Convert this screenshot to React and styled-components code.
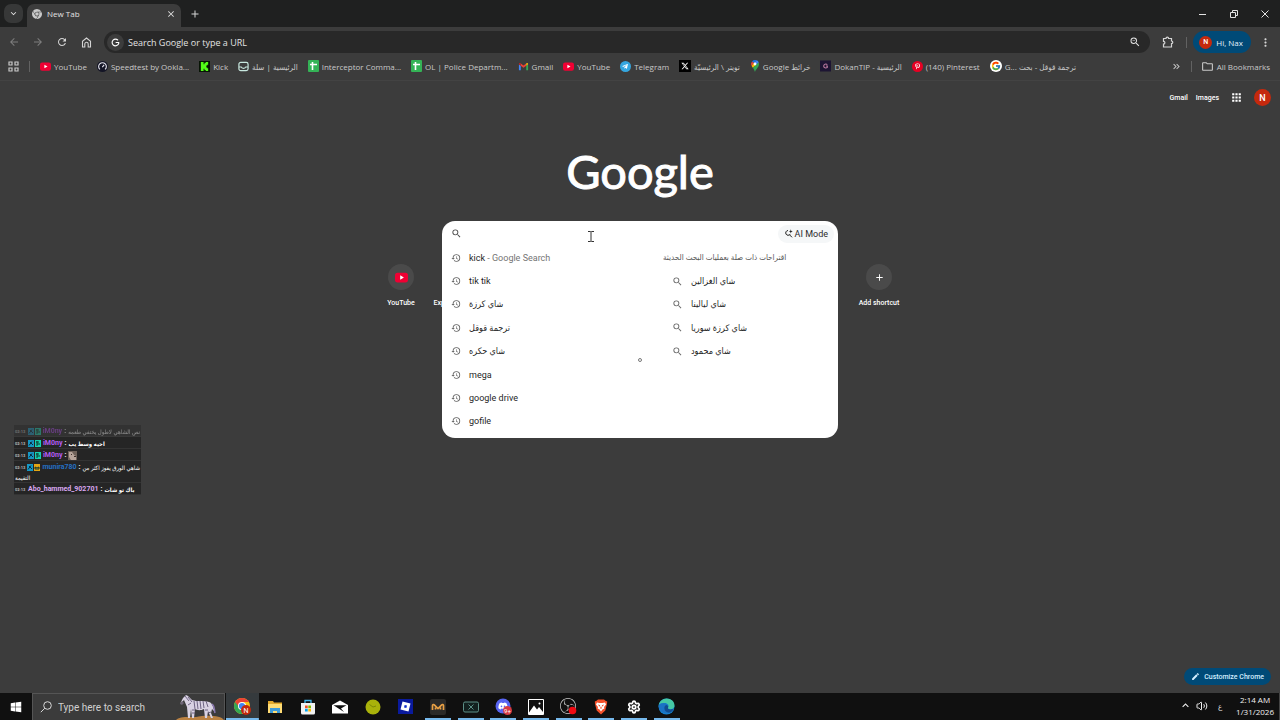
import styled, { createGlobalStyle } from "styled-components";
import {
    MdArrowBack,
    MdArrowForward,
    MdRefresh,
    MdOutlineZoomOut,
    MdMoreVert,
    MdSearch,
    MdHistory,
    MdAdd,
    MdApps,
    MdEdit,
    MdOutlineFolder,
    MdClose,
    MdKeyboardArrowDown,
    MdKeyboardArrowUp,
    MdKeyboardDoubleArrowRight,
} from "react-icons/md";
import { FcGoogle } from "react-icons/fc";
import { FaTelegramPlane, FaPinterestP, FaDiscord, FaWindows } from "react-icons/fa";
import { SiGooglechrome, SiObsstudio } from "react-icons/si";
import { FaXTwitter, FaG } from "react-icons/fa6";
import { Volume2, Settings } from "lucide-react";

const GlobalStyle = createGlobalStyle`
    * {
        box-sizing: border-box;
    }

    body {
        margin: 0;
        background: #3c3c3c;
        font-family: "Open Sans", "DejaVu Sans Condensed", "DejaVu Sans", sans-serif;
        color: #e3e3e3;
    }

    button, input {
        font: inherit;
        color: inherit;
        border: 0;
        padding: 0;
        background: none;
        outline: none;
    }

    a {
        color: inherit;
        text-decoration: none;
    }

    svg {
        display: block;
        flex: none;
    }
`;

const Screen = styled.div`
    display: flex;
    flex-direction: column;
    height: 100vh;
    overflow: hidden;
`;

/* ---------- browser ---------- */

const TabStrip = styled.header`
    display: flex;
    align-items: center;
    height: 27px;
    padding-left: 4px;
    background: #1f2020;
`;

const TabSearch = styled.button`
    display: flex;
    align-items: center;
    justify-content: center;
    width: 19px;
    height: 19px;
    border-radius: 7px;
    background: #373838;
`;

const Tab = styled.div`
    display: flex;
    align-items: center;
    align-self: flex-end;
    gap: 5px;
    width: 154px;
    height: 23px;
    margin-left: 4px;
    padding: 0 5px 4px;
    border-radius: 7px 7px 0 0;
    background: #3c3c3c;
    font-size: 8px;
`;

const TabTitle = styled.span`
    flex: 1;
`;

const IconButton = styled.button`
    display: flex;
    align-items: center;
    justify-content: center;
    width: ${({ $w }) => $w || 24}px;
    height: 19px;
    color: ${({ $dim }) => ($dim ? "#7d7d7d" : "#d5d5d5")};
`;

const WindowButtons = styled.div`
    display: flex;
    margin-left: auto;
`;

const Toolbar = styled.div`
    display: flex;
    align-items: center;
    height: 30px;
    padding: 0 2px;
`;

const Omnibox = styled.label`
    display: flex;
    align-items: center;
    flex: 1;
    gap: 4px;
    height: 22px;
    margin-left: 6px;
    padding: 0 9px 0 3px;
    border-radius: 11px;
    background: #282828;
    font-size: 9px;

    input {
        flex: 1;
    }

    input::placeholder {
        color: #e3e3e3;
        opacity: 1;
    }
`;

const SiteIcon = styled.span`
    display: flex;
    align-items: center;
    justify-content: center;
    width: 17px;
    height: 17px;
    border-radius: 50%;
    background: #3c3c3c;
    color: #fff;
`;

const Divider = styled.span`
    width: 1px;
    height: 11px;
    background: #626262;
`;

const Profile = styled.button`
    display: flex;
    align-items: center;
    gap: 4px;
    height: 22px;
    margin: 0 1px 0 6px;
    padding: 0 8px 0 6px;
    border-radius: 11px;
    background: #004a77;
    color: #e6f3fc;
    font-size: 8px;
`;

const Avatar = styled.span`
    display: flex;
    align-items: center;
    justify-content: center;
    width: ${({ $size }) => $size}px;
    height: ${({ $size }) => $size}px;
    border-radius: 50%;
    background: #c5290d;
    color: #fff;
    font-family: Roboto, sans-serif;
    font-size: ${({ $size }) => ($size > 14 ? 9 : 7)}px;
    font-weight: 500;
`;

const BookmarkBar = styled.nav`
    display: flex;
    align-items: center;
    gap: 10px;
    height: 24px;
    padding: 0 10px 5px 8px;
    border-bottom: 1px solid #434343;
    color: #c9c9c9;
    font-size: 8px;
    white-space: nowrap;
`;

const Bookmark = styled.a`
    display: flex;
    align-items: center;
    gap: 3px;
`;

const BookmarkEnd = styled.div`
    display: flex;
    align-items: center;
    gap: 9px;
    margin-left: auto;
`;

/* ---------- new tab page ---------- */

const Page = styled.main`
    display: flex;
    flex-direction: column;
    align-items: center;
    flex: 1;
    min-height: 0;
    padding: 7px 9px 8px;
`;

const PageLinks = styled.div`
    display: flex;
    align-items: center;
    align-self: flex-end;
    gap: 8px;
    height: 19px;
    font-family: Roboto, sans-serif;
    font-size: 7px;
    font-weight: 500;
    color: #fff;
`;

const AppsButton = styled.button`
    margin: 0 3px;
`;

const Logo = styled.h1`
    margin: 34px 0 0;
    height: 80px;
    font-family: Lato, sans-serif;
    font-size: 47px;
    font-weight: 400;
    line-height: 60px;
    color: #fff;
    -webkit-text-stroke: 1px #fff;
`;

const SearchArea = styled.div`
    position: relative;
    width: 396px;
    height: 43px;
`;

const SearchPanel = styled.form`
    position: absolute;
    inset: 0 0 auto;
    padding-bottom: 5px;
    border-radius: 13px;
    background: #fff;
    color: #1f1f1f;
    font-family: Roboto, "DejaVu Sans Condensed", "DejaVu Sans", sans-serif;
    font-size: 9px;
`;

const SearchRow = styled.div`
    display: flex;
    align-items: center;
    gap: 8px;
    height: 25px;
    padding: 0 4px 0 9px;
    color: #474747;

    input {
        flex: 1;
    }
`;

const AiButton = styled.button`
    display: flex;
    align-items: center;
    gap: 2px;
    height: 18px;
    padding: 0 6px;
    border-radius: 9px;
    background: #f5f7f8;
    color: #2b2b2b;
`;

const Columns = styled.div`
    display: grid;
    grid-template-columns: 221px 1fr;
`;

const List = styled.ul`
    display: grid;
    grid-template-rows: repeat(8, 1fr);
    height: 187px;
    margin: 0;
    padding: 0;
    list-style: none;
`;

const Suggestion = styled.li`
    display: flex;
    align-items: center;
    gap: 8px;
    padding-left: 9px;

    svg {
        color: #666;
    }

    em {
        font-style: normal;
        color: #747474;
    }
`;

const ListTitle = styled.li`
    display: flex;
    align-items: center;
    font-size: 8px;
    color: #555;
`;

const Shortcuts = styled.div`
    display: flex;
    width: 531px;

    a:last-child {
        margin-left: auto;
    }
`;

const Shortcut = styled.a`
    display: flex;
    flex-direction: column;
    align-items: ${({ $start }) => ($start ? "flex-start" : "center")};
    gap: 8px;
    width: 53px;
    padding-left: ${({ $start }) => ($start ? 6 : 0)}px;
    font-family: Roboto, sans-serif;
    font-size: 7px;
    font-weight: 500;
    line-height: 10px;
    color: #fff;
    white-space: nowrap;
`;

const ShortcutIcon = styled.span`
    display: flex;
    align-items: center;
    justify-content: center;
    width: 26px;
    height: 26px;
    border-radius: 50%;
    background: #4a4a4a;
`;

const Customize = styled.button`
    display: flex;
    align-items: center;
    align-self: flex-end;
    gap: 4px;
    height: 17px;
    margin-top: auto;
    padding: 0 7px;
    border-radius: 9px;
    background: #004a77;
    color: #d3eeff;
    font-family: Roboto, sans-serif;
    font-size: 7px;
    font-weight: 500;
`;

/* ---------- things over the page ---------- */

const Chat = styled.aside`
    position: fixed;
    left: 14px;
    top: 425px;
    width: 127px;
    font-family: Roboto, "DejaVu Sans Condensed", "DejaVu Sans", sans-serif;
    font-size: 7px;
    font-weight: 700;
    white-space: nowrap;
`;

const Message = styled.div`
    padding: 1px 1px 0;
    border-bottom: 1px solid #333;
    background: #252525;
    color: #fff;
    opacity: ${({ $faded }) => ($faded ? 0.4 : 1)};
`;

const MessageLine = styled.div`
    display: flex;
    align-items: center;
    gap: 2px;
    height: 10px;
`;

const Time = styled.time`
    width: 11px;
    font-size: 4px;
    color: #bbb;
`;

const Nick = styled.span`
    color: ${({ $color }) => $color};
`;

const ChatText = styled.bdi`
    font-size: 6px;
    font-weight: ${({ $light }) => ($light ? 400 : 700)};
`;

const Pointer = styled.svg`
    position: fixed;
    left: ${({ $x }) => $x}px;
    top: ${({ $y }) => $y}px;
`;

/* ---------- taskbar ---------- */

const Taskbar = styled.footer`
    display: flex;
    height: 27px;
    background: #101010;
`;

const StartButton = styled.button`
    display: flex;
    align-items: center;
    justify-content: center;
    width: 32px;
    color: #fff;
`;

const TaskSearch = styled.label`
    display: flex;
    align-items: center;
    gap: 6px;
    width: 193px;
    padding-left: 7px;
    border: 1px solid #555;
    border-bottom: 0;
    background: #3b3b3b;
    font-family: Roboto, sans-serif;
    font-size: 10px;

    input {
        flex: 1;
        min-width: 0;
    }

    input::placeholder {
        color: #d0d0d0;
        opacity: 1;
    }
`;

const TaskApps = styled.div`
    display: flex;
    width: 457px;
    margin-left: 1px;
`;

const TaskApp = styled.button`
    display: flex;
    align-items: center;
    justify-content: center;
    flex: 1;
    background-color: ${({ $active }) => ($active ? "#353a3d" : "transparent")};
    background-image: ${({ $open }) => ($open ? "linear-gradient(#76b9ed, #76b9ed)" : "none")};
    background-repeat: no-repeat;
    background-position: bottom;
    background-size: ${({ $active }) => ($active ? "100%" : "26px")} 2px;
`;

const Tray = styled.div`
    display: flex;
    align-items: center;
    gap: 4px;
    margin-left: auto;
    padding: 0 3px 2px 0;
    border-right: 1px solid #444;
    font-size: 8px;
    line-height: 12px;
    color: #f0f0f0;
`;

const Clock = styled.time`
    margin-left: 4px;
    padding-right: 2px;
    text-align: center;
`;

const YouTubeIcon = ({ size = 11 }) => (
    <svg width={size} height={size} viewBox="0 0 12 12">
        <rect y="1.5" width="12" height="9" rx="2.4" fill="#f00033" />
        <path d="M4.8 4v4l3.4-2z" fill="#fff" />
    </svg>
);

const SheetIcon = () => (
    <svg width="11" height="12" viewBox="0 0 11 12">
        <rect width="11" height="12" rx="1" fill="#34b356" />
        <path d="M2 4.5h7M4.5 2v8" stroke="#fff" strokeWidth="1.6" />
    </svg>
);

const SpeedIcon = () => (
    <svg width="11" height="11" viewBox="0 0 12 12">
        <circle cx="6" cy="6" r="6" fill="#141526" />
        <path d="M3.2 9.2a4.2 4.2 0 1 1 5.6 0M5.8 6.6l2-2.4" fill="none" stroke="#e8e8f0" strokeWidth="1.2" />
    </svg>
);

const KickIcon = () => (
    <svg width="11" height="11" viewBox="0 0 12 12">
        <rect width="12" height="12" fill="#071405" />
        <path d="M2 1h3v2.5h1V2h1.5V1H10v3H9v1H8v2h1v1h1v3H7.5v-1H6V8.5H5V11H2z" fill="#53fc18" />
    </svg>
);

const SallaIcon = () => (
    <svg width="11" height="11" viewBox="0 0 12 12" fill="none" stroke="#c8e8df">
        <rect x="1" y="1.5" width="10" height="9" rx="2" strokeWidth="1.3" />
        <path d="M1 6.5h2.5c.5 2 4.500 2 5 0H11" strokeWidth="1.2" />
    </svg>
);

const GmailIcon = () => (
    <svg width="11" height="11" viewBox="0 0 12 12">
        <path d="M1 10V3.5l2 1.6V10z" fill="#4285f4" />
        <path d="M9 10V5.1l2-1.6V10z" fill="#34a853" />
        <path d="M3 5.1V2.6l3 2.3 3-2.3v2.5L6 7.4z" fill="#ea4335" />
        <path d="M1 3.5C1 2.2 2.2 1.9 3 2.6v2.5z" fill="#c5221f" />
        <path d="M11 3.5c0-1.3-1.2-1.6-2-.9v2.5z" fill="#fbbc04" />
    </svg>
);

const TelegramIcon = () => (
    <svg width="11" height="11" viewBox="0 0 12 12">
        <circle cx="6" cy="6" r="6" fill="#35a6df" />
        <FaTelegramPlane x="2" y="2.5" size="7" color="#fff" />
    </svg>
);

const XIcon = () => (
    <svg width="12" height="12" viewBox="0 0 12 12">
        <rect width="12" height="12" fill="#000" />
        <FaXTwitter x="2" y="2" size="8" color="#fff" />
    </svg>
);

const MapsIcon = () => (
    <svg width="10" height="12" viewBox="0 0 10 12">
        <path d="M5 0a4 4 0 0 0-3 1.4L4 3l2.6-2.7A4 4 0 0 0 5 0z" fill="#1a73e8" />
        <path d="M2 1.4A4 4 0 0 0 1.6 6L4 3z" fill="#ea4335" />
        <path d="M6.6.3 4 3l2 2 2.8-2.6A4 4 0 0 0 6.6.3z" fill="#4285f4" />
        <path d="M1.6 6l1.2 1.7L6 5 4 3z" fill="#fbbc04" />
        <path d="M2.8 7.7C4 9.3 4.5 10.3 5 12c.6-3 3.9-4.3 4-8 0-.6 0-1.1-.2-1.6z" fill="#34a853" />
        <circle cx="5" cy="4" r="1.4" fill="#fff" />
    </svg>
);

const DokanIcon = () => (
    <svg width="11" height="12" viewBox="0 0 12 12">
        <rect width="12" height="12" fill="#1d1533" />
        <path d="M8 4.5C6.5 3.2 4 4 4 6s2.5 2.8 4 1.5V6H6.5" fill="none" stroke="#b9799f" strokeWidth="1.2" />
    </svg>
);

const PinterestIcon = () => (
    <svg width="11" height="11" viewBox="0 0 12 12">
        <circle cx="6" cy="6" r="6" fill="#e60023" />
        <FaPinterestP x="2.5" y="2.5" size="7" color="#fff" />
    </svg>
);

const GoogleIcon = () => (
    <svg width="12" height="12" viewBox="0 0 12 12">
        <circle cx="6" cy="6" r="6" fill="#fff" />
        <FcGoogle x="1" y="1" size="10" />
    </svg>
);

const GridIcon = () => (
    <svg width="11" height="11" viewBox="0 0 11 11" fill="none" stroke="#c9c9c9" strokeWidth="1.2">
        <path d="M1 1h3v3H1zM7 1h3v3H7zM1 7h3v3H1zM7 7h3v3H7z" />
    </svg>
);

const HomeIcon = () => (
    <svg width="11" height="11" viewBox="0 0 11 11" fill="none" stroke="currentColor" strokeWidth="1.1">
        <path d="M1.5 10V4.2L5.5 1l4 3.2V10H7.2V7a1.7 1.7 0 0 0-3.4 0v3z" />
    </svg>
);

const PuzzleIcon = () => (
    <svg width="12" height="12" viewBox="0 0 12 12" fill="none" stroke="currentColor" strokeWidth="1.2">
        <path d="M1.5 2.5H4a1.3 1.3 0 0 1 2.6 0h2.9V5a1.3 1.3 0 0 1 0 2.6V11h-8V8.2a1.4 1.4 0 0 0 0-2.8z" />
    </svg>
);

const AiIcon = () => (
    <svg width="9" height="9" viewBox="0 0 9 9" fill="none" stroke="#1f1f1f">
        <path d="M4 1.5a2.4 2.4 0 1 0 2.2 3.6M5.5 5.8 8 8.3" />
        <path d="M6.8.2 7.3 2l1.5.5-1.5.5-.5 1.6-.5-1.6-1.5-.5L6.3 2z" fill="#1f1f1f" stroke="none" />
    </svg>
);

const ChromeIcon = () => (
    <svg width="19" height="19" viewBox="0 0 19 19">
        <circle cx="9" cy="9" r="8" fill="#fbc116" />
        <path d="M9 9 2.1 5A8 8 0 0 0 9 17z" fill="#34a853" />
        <path d="M9 5h6.9A8 8 0 0 0 2.1 5L6 10z" fill="#ea4335" />
        <circle cx="9" cy="9" r="4" fill="#fff" />
        <circle cx="9" cy="9" r="3.1" fill="#4285f4" />
        <circle cx="13" cy="13" r="5" fill="#c5290d" />
        <text x="13" y="15.5" fontSize="7" textAnchor="middle" fill="#fff" fontFamily="Roboto">N</text>
    </svg>
);

const FolderIcon = () => (
    <svg width="16" height="14" viewBox="0 0 16 14">
        <path d="M1 1h5l1 1.5h8V13H1z" fill="#e2a92e" />
        <path d="M1 4h14v9H1z" fill="#ffdc74" />
        <path d="M3 13V8h10v5h-3v-2H6v2z" fill="#3f9bd8" />
    </svg>
);

const StoreIcon = () => (
    <svg width="16" height="16" viewBox="0 0 16 16">
        <path d="M5 4V1.5h6V4" fill="none" stroke="#42b5ea" strokeWidth="1.3" />
        <path d="M1 4h14v10a1.5 1.5 0 0 1-1.5 1.5h-11A1.5 1.5 0 0 1 1 14z" fill="#f1f1f1" />
        <path d="M5 6.5h2.7v2.7H5z" fill="#f25022" />
        <path d="M8.3 6.5H11v2.7H8.3z" fill="#7fba00" />
        <path d="M5 9.8h2.7v2.7H5z" fill="#00a4ef" />
        <path d="M8.3 9.8H11v2.7H8.3z" fill="#ffb900" />
    </svg>
);

const MailIcon = () => (
    <svg width="16" height="14" viewBox="0 0 16 14">
        <path d="M0 5 8 .5 16 5v8.5H0z" fill="#fff" />
        <path d="M1.5 5.2h13L9 8.6l3 3.4z" fill="#101010" />
    </svg>
);

const LimeIcon = () => (
    <svg width="16" height="16" viewBox="0 0 16 16">
        <circle cx="8" cy="8" r="7.5" fill="#a9b20b" />
        <path d="M4.5 5.5 8 8l3-1" fill="none" stroke="#7e8a05" />
    </svg>
);

const RobloxIcon = () => (
    <svg width="15" height="15" viewBox="0 0 15 15">
        <rect width="15" height="15" fill="#0a1a9c" />
        <path d="m4.5 2.5 8 2-2 8-8-2z" fill="#fff" />
        <path d="m6.6 6 2.4.6-.6 2.4-2.4-.6z" fill="#1330c8" />
    </svg>
);

const MoIcon = () => (
    <svg width="16" height="16" viewBox="0 0 16 16">
        <rect width="16" height="16" rx="2" fill="#2b2a28" />
        <path
            d="M2.5 11V6.5a1 1 0 0 1 1.8-.6L8 9.5l3.7-3.6a1 1 0 0 1 1.8.6V11M5.5 10.500v-2M10.500 10.500v-2"
            fill="none"
            stroke="#e8a045"
            strokeWidth="1.7"
        />
    </svg>
);

const BoxIcon = () => (
    <svg width="16" height="12" viewBox="0 0 16 12" fill="none" stroke="#5d8f87">
        <rect x=".5" y="1" width="15" height="10" rx="1.5" fill="#12201f" />
        <path d="m5.5 3.5 5 5M10.5 3.5l-5 5" />
    </svg>
);

const DiscordIcon = () => (
    <svg width="17" height="17" viewBox="0 0 17 17">
        <circle cx="8" cy="8" r="7.5" fill="#5865f2" />
        <FaDiscord x="3" y="3" size="10" color="#fff" />
        <circle cx="12.5" cy="12.5" r="4.5" fill="#d83a41" />
        <text x="12.5" y="15" fontSize="6" textAnchor="middle" fill="#fff" fontFamily="Roboto">9+</text>
    </svg>
);

const PhotosIcon = () => (
    <svg width="16" height="16" viewBox="0 0 16 16">
        <path d="M.5.5h15v15H.5z" fill="none" stroke="#fff" />
        <path d="m1 13.5 5-7 3 4 2-2.5 4 5v2H1z" fill="#fff" />
        <circle cx="11.5" cy="4.5" r="1" fill="#fff" />
    </svg>
);

const ObsIcon = () => (
    <svg width="17" height="17" viewBox="0 0 17 17">
        <SiObsstudio size="16" color="#c9c9c9" />
        <circle cx="12.5" cy="12.5" r="3.8" fill="#f00b13" />
    </svg>
);

const BraveIcon = () => (
    <svg width="14" height="16" viewBox="0 0 14 16">
        <path d="M4 .5h6l1.5 1.3 1.7.7L13 5l-1.7 6.5L7 15.5l-4.3-4L1 5 .8 2.5l1.7-.7z" fill="#f4502a" />
        <path d="m3 3.5 2.500.5h3l2.500-.5 1 2-2 2.500.4 1.500-2 1L7 12.500l-1.400-2-2-1L4 8 2 5.500z" fill="#fff" />
        <path d="m3.8 5.5 2.4.7-.5 1.5zM10.2 5.5l-2.4.7.5 1.5zM7 7l1 2.500H6z" fill="#f4502a" />
    </svg>
);

const EdgeIcon = () => (
    <svg width="17" height="17" viewBox="0 0 17 17">
        <circle cx="8.5" cy="8.5" r="8" fill="#1683d0" />
        <path d="M.6 7.5C1.2 3.4 4.6.5 8.6.5c4.6 0 7.9 3.3 7.9 6.7 0 2.4-1.7 4-4 4-1.7 0-2.8-.8-2.5-1.5 1.6-2-.4-4.6-3.5-4.6C3.7 5.1 1.6 6 .6 7.5z" fill="#45c8a5" />
        <path d="M.6 7.5C2.6 4.5 7.9 4.2 9.8 7.2c-1.8-.6-3.5.5-3.5 2.8 0 3.2 2.6 5.2 6 4.5A8 8 0 0 1 .6 7.5z" fill="#1b72c4" />
        <path d="M10 9.7c-.5 1 1 1.8 2.7 1.7 1.3 0 2.2-.4 3-.9-.4 1.6-1.7 3.3-3.4 4-3.4.7-6-1.3-6-4.5 0-1.5 1-2.7 2.3-2.9 1.5.4 2 1.7 1.4 2.6z" fill="#124c91" />
    </svg>
);

const Zebra = () => (
    <svg width="48" height="26" viewBox="0 0 48 26">
        <path d="M0 26c3-4 14-3 20-3 9-2 25-2 28 3z" fill="#b98142" />
        <path d="M4 10 7 4l3-3 2 1 4 4c5 2 12 0 17 2 4 1 4 6 6 10l-3-3-1 4 2 5h-2l-3-7-1 7h-2l-1-9c-4 2-7 1-9 0l-1 9h-2l-1-9-1 9h-2l-1-11-3-7-4 4z" fill="#d9d2e3" />
        <path d="m9 2 4 5m-1-4 4 5m-1 1-3 2m6-4 1 8m2-8 1 8m2-8 1 8m2-8 1 7m2-7 2 6M16 16h3m-3 3h3m10-3h3m0 3 3-1" stroke="#625777" strokeWidth=".9" fill="none" />
        <path d="M36 10c3 2 2 6 3 9" stroke="#8b78b0" strokeWidth="1.5" fill="none" />
        <path d="m4 10 2-3 2 2-2 2z" fill="#6d6475" />
    </svg>
);

const bookmarks = [
    { icon: <YouTubeIcon />, text: "YouTube" },
    { icon: <SpeedIcon />, text: "Speedtest by Ookla..." },
    { icon: <KickIcon />, text: "Kick" },
    { icon: <SallaIcon />, text: "الرئيسية | سلة" },
    { icon: <SheetIcon />, text: "Interceptor Comma..." },
    { icon: <SheetIcon />, text: "OL | Police Departm..." },
    { icon: <GmailIcon />, text: "Gmail" },
    { icon: <YouTubeIcon />, text: "YouTube" },
    { icon: <TelegramIcon />, text: "Telegram" },
    { icon: <XIcon />, text: "تويتر \\ الرئيسيّة" },
    { icon: <MapsIcon />, text: "خرائط Google" },
    { icon: <DokanIcon />, text: "الرئيسية - DokanTIP" },
    { icon: <PinterestIcon />, text: "(140) Pinterest" },
    { icon: <GoogleIcon />, text: "ترجمة قوقل - بحث G...\u200e" },
];

const recent = ["tik tik", "شاي كرزة", "ترجمة قوقل", "شاي حكره", "mega", "google drive", "gofile"];
const related = ["شاي الغزالين", "شاي ليالينا", "شاي كرزة سوريا", "شاي محمود"];

const apps = [
    { name: "Chrome", icon: <ChromeIcon />, active: true, open: true },
    { name: "File Explorer", icon: <FolderIcon /> },
    { name: "Store", icon: <StoreIcon /> },
    { name: "Mail", icon: <MailIcon /> },
    { name: "Lime", icon: <LimeIcon /> },
    { name: "Roblox", icon: <RobloxIcon /> },
    { name: "M", icon: <MoIcon />, open: true },
    { name: "X", icon: <BoxIcon />, open: true },
    { name: "Discord", icon: <DiscordIcon />, open: true },
    { name: "Photos", icon: <PhotosIcon />, open: true },
    { name: "OBS", icon: <ObsIcon />, open: true },
    { name: "Brave", icon: <BraveIcon />, open: true },
    { name: "Settings", icon: <Settings size={14} color="#fff" strokeWidth={3} />, open: true },
    { name: "Edge", icon: <EdgeIcon />, open: true },
];

function ChatBadges({ gold }) {
    return (
        <svg width="13" height="7" viewBox="0 0 13 7">
            <rect width="6" height="7" fill="#1597c4" />
            <path d="M1 5.5 4 1.5M2 2l3 3" stroke="#0a2c40" />
            <rect x="7" width="6" height="7" fill={gold ? "#e5a614" : "#16d0b0"} />
            <path d={gold ? "M8 5V3l2 1 2-1v2z" : "M8 2h3M9 4h3M9 1v5"} stroke="#10362f" fill="none" />
        </svg>
    );
}

function BrowserTop() {
    return (
        <>
            <TabStrip>
                <TabSearch aria-label="Search tabs">
                    <MdKeyboardArrowDown size={11} />
                </TabSearch>
                <Tab>
                    <SiGooglechrome size={10} color="#c9c9c9" />
                    <TabTitle>New Tab</TabTitle>
                    <button aria-label="Close tab">
                        <MdClose size={10} />
                    </button>
                </Tab>
                <IconButton $w={28} aria-label="New tab">
                    <MdAdd size={12} />
                </IconButton>
                <WindowButtons>
                    <IconButton $w={31} aria-label="Minimize">
                        <svg width="8" height="8" viewBox="0 0 8 8">
                            <path d="M0 4.5h7" stroke="#e3e3e3" />
                        </svg>
                    </IconButton>
                    <IconButton $w={31} aria-label="Restore">
                        <svg width="8" height="8" viewBox="0 0 8 8" fill="none" stroke="#e3e3e3">
                            <path d="M.5 2.5h5v5h-5zM2.5 2V.5h5v5H6" />
                        </svg>
                    </IconButton>
                    <IconButton $w={31} aria-label="Close">
                        <svg width="8" height="8" viewBox="0 0 8 8" stroke="#e3e3e3">
                            <path d="m.5.5 7 7M7.5.5l-7 7" />
                        </svg>
                    </IconButton>
                </WindowButtons>
            </TabStrip>
            <Toolbar>
                <IconButton $dim aria-label="Back">
                    <MdArrowBack size={12} />
                </IconButton>
                <IconButton $dim aria-label="Forward">
                    <MdArrowForward size={12} />
                </IconButton>
                <IconButton aria-label="Reload">
                    <MdRefresh size={12} />
                </IconButton>
                <IconButton aria-label="Home">
                    <HomeIcon />
                </IconButton>
                <Omnibox>
                    <SiteIcon>
                        <FaG size={9} />
                    </SiteIcon>
                    <input placeholder="Search Google or type a URL" aria-label="Address" />
                    <MdOutlineZoomOut size={12} />
                </Omnibox>
                <IconButton $w={36} aria-label="Extensions">
                    <PuzzleIcon />
                </IconButton>
                <Divider />
                <Profile>
                    <Avatar $size={13}>N</Avatar>
                    Hi, Nax
                </Profile>
                <IconButton aria-label="Menu" $w={26}>
                    <MdMoreVert size={13} />
                </IconButton>
            </Toolbar>
            <BookmarkBar>
                <GridIcon />
                <Divider />
                {bookmarks.map((item, i) => (
                    <Bookmark key={i} href="#">
                        {item.icon}
                        <bdi>{item.text}</bdi>
                    </Bookmark>
                ))}
                <BookmarkEnd>
                    <MdKeyboardDoubleArrowRight size={11} />
                    <Divider />
                    <Bookmark href="#">
                        <MdOutlineFolder size={13} />
                        All Bookmarks
                    </Bookmark>
                </BookmarkEnd>
            </BookmarkBar>
        </>
    );
}

function SearchBox() {
    return (
        <SearchArea>
            <SearchPanel>
                <SearchRow>
                    <MdSearch size={11} />
                    <input aria-label="Search" />
                    <AiButton type="button">
                        <AiIcon />
                        AI Mode
                    </AiButton>
                </SearchRow>
                <Columns>
                    <List>
                        <Suggestion>
                            <MdHistory size={10} />
                            <span>
                                kick <em>- Google Search</em>
                            </span>
                        </Suggestion>
                        {recent.map((text) => (
                            <Suggestion key={text}>
                                <MdHistory size={10} />
                                <bdi>{text}</bdi>
                            </Suggestion>
                        ))}
                    </List>
                    <List>
                        <ListTitle>اقتراحات ذات صلة بعمليات البحث الحديثة</ListTitle>
                        {related.map((text) => (
                            <Suggestion key={text}>
                                <MdSearch size={11} />
                                <bdi>{text}</bdi>
                            </Suggestion>
                        ))}
                    </List>
                </Columns>
            </SearchPanel>
        </SearchArea>
    );
}

function ChatOverlay() {
    return (
        <Chat>
            <Message $faded>
                <MessageLine>
                    <Time>02:13</Time>
                    <ChatBadges />
                    <Nick $color="#a83fe8">iM0ny</Nick>:
                    <ChatText $light>نص الشاهي لاطول يختفي طعمه</ChatText>
                </MessageLine>
            </Message>
            <Message>
                <MessageLine>
                    <Time>02:13</Time>
                    <ChatBadges />
                    <Nick $color="#b35cf5">iM0ny</Nick>:
                    <ChatText>احيه وسط يب</ChatText>
                </MessageLine>
            </Message>
            <Message>
                <MessageLine>
                    <Time>02:13</Time>
                    <ChatBadges />
                    <Nick $color="#b35cf5">iM0ny</Nick>:
                    <svg width="9" height="9" viewBox="0 0 9 9">
                        <rect width="9" height="9" fill="#6f625a" />
                        <path d="M1 1h3l2 3 2 1v4H3L1 6z" fill="#b6a49a" />
                        <path d="M3 3h1v1H3zM6 5h2v1H6z" fill="#3c302c" />
                    </svg>
                </MessageLine>
            </Message>
            <Message>
                <MessageLine>
                    <Time>02:13</Time>
                    <ChatBadges gold />
                    <Nick $color="#2470c4">munira780</Nick>:
                    <ChatText $light>شاهي الورق يفوز اكثر من</ChatText>
                </MessageLine>
                <MessageLine>
                    <ChatText $light>التقيمة</ChatText>
                </MessageLine>
            </Message>
            <Message>
                <MessageLine>
                    <Time>02:13</Time>
                    <Nick $color="#d9a8f0">Abo_hammed_902701</Nick>:
                    <ChatText>باك تو شات</ChatText>
                </MessageLine>
            </Message>
        </Chat>
    );
}

export default function App() {
    return (
        <Screen>
            <GlobalStyle />
            <BrowserTop />
            <Page>
                <PageLinks>
                    <a href="#">Gmail</a>
                    <a href="#">Images</a>
                    <AppsButton aria-label="Google apps">
                        <MdApps size={13} />
                    </AppsButton>
                    <Avatar $size={17}>N</Avatar>
                </PageLinks>
                <Logo>Google</Logo>
                <SearchBox />
                <Shortcuts>
                    <Shortcut href="#">
                        <ShortcutIcon>
                            <YouTubeIcon size={13} />
                        </ShortcutIcon>
                        YouTube
                    </Shortcut>
                    <Shortcut href="#" $start>
                        <span style={{ height: 26 }} />
                        Exp
                    </Shortcut>
                    <Shortcut href="#">
                        <ShortcutIcon>
                            <MdAdd size={11} />
                        </ShortcutIcon>
                        Add shortcut
                    </Shortcut>
                </Shortcuts>
                <Customize>
                    <MdEdit size={9} />
                    Customize Chrome
                </Customize>
            </Page>
            <Taskbar>
                <StartButton aria-label="Start">
                    <FaWindows size={12} />
                </StartButton>
                <TaskSearch>
                    <svg width="12" height="12" viewBox="0 0 12 12" fill="none" stroke="#d8d8d8">
                        <circle cx="7.5" cy="4.5" r="3.8" />
                        <path d="m4.8 7.2-4 4" />
                    </svg>
                    <input placeholder="Type here to search" aria-label="Type here to search" />
                    <Zebra />
                </TaskSearch>
                <TaskApps>
                    {apps.map((app) => (
                        <TaskApp key={app.name} aria-label={app.name} $active={app.active} $open={app.open}>
                            {app.icon}
                        </TaskApp>
                    ))}
                </TaskApps>
                <Tray>
                    <MdKeyboardArrowUp size={13} />
                    <Volume2 size={12} />
                    <IconButton as="span" $w={16}>
                        ع
                    </IconButton>
                    <Clock>
                        2:14 AM
                        <br />
                        1/31/2026
                    </Clock>
                </Tray>
            </Taskbar>
            <ChatOverlay />
            <Pointer $x={588} $y={231} width="6" height="11" viewBox="0 0 6 11">
                <path d="M0 .5h2.5L3 1l.5-.5H6M3 1v9M0 10.5h2.5L3 10l.5.5H6" fill="none" stroke="#333" />
            </Pointer>
            <Pointer $x={637} $y={357} width="6" height="6" viewBox="0 0 6 6">
                <circle cx="3" cy="3" r="1.5" fill="#fff" stroke="#777" />
            </Pointer>
        </Screen>
    );
}
